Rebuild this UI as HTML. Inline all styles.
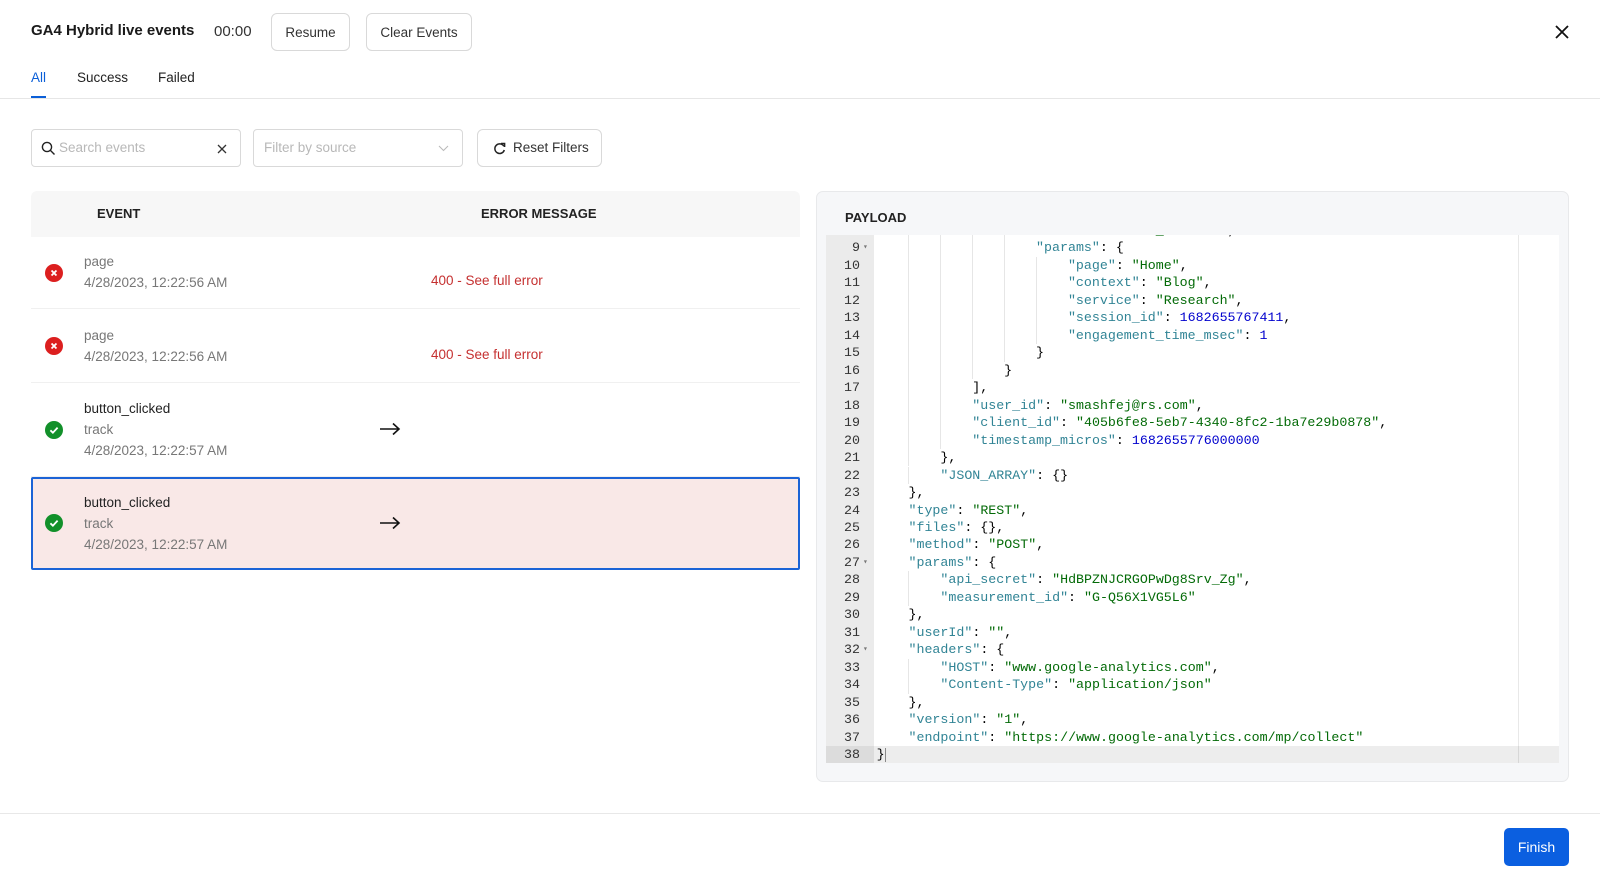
<!DOCTYPE html>
<html><head><meta charset="utf-8">
<style>
*{box-sizing:border-box;margin:0;padding:0}
body{width:1600px;height:880px;background:#fff;font-family:"Liberation Sans",sans-serif;color:#1f1f1f;position:relative;overflow:hidden}
.abs{position:absolute}
.btn{position:absolute;border:1px solid #d9d9d9;border-radius:6px;background:#fff;font-size:13.5px;color:#333;display:flex;align-items:center;justify-content:center}
.inp{position:absolute;border:1px solid #d9d9d9;border-radius:4px;background:#fff;font-size:13.5px;color:#b8b8b8}
.row{position:absolute;left:31px;width:769px;border-bottom:1px solid #f0f0f0}
.ic{position:absolute;left:14px;width:18px;height:18px;border-radius:50%}
.ic svg{width:18px;height:18px}
.t1{position:absolute;left:53px;font-size:13.5px;color:#222}
.t2{position:absolute;left:53px;font-size:13.5px;color:#777}
.err{position:absolute;left:400px;font-size:13.5px;color:#c53030}
.arr{position:absolute;left:348px}
.code{position:absolute;left:826px;top:235px;width:733px;height:528px;background:#fff;overflow:hidden;font-family:"Liberation Mono",monospace;font-size:13.3px}
.gut{position:absolute;left:0;top:0;width:48px;height:100%;background:#ebebeb}
.ln{position:absolute;left:0;width:733px;height:17.48px;line-height:17.48px;white-space:pre}
.ln .n{position:absolute;left:0;width:34px;text-align:right;color:#333}
.ln .f{position:absolute;left:37px;font-size:8px;color:#777}
.ln .c{position:absolute;left:50.6px;color:#000}
.g{display:inline-block;width:31.9px}
.g+.g{border-left:1px solid #e6e6e6}
.k{color:#318495}.s{color:#036a07}.v{color:#0000cd}
</style></head><body>
<div class="abs" style="left:31px;top:22px;font-size:15px;font-weight:700;color:#1a1a1a">GA4 Hybrid live events</div>
<div class="abs" style="left:214px;top:23px;font-size:15px;color:#333">00:00</div>
<div class="btn" style="left:271px;top:13px;width:79px;height:38px">Resume</div>
<div class="btn" style="left:366px;top:13px;width:106px;height:38px">Clear Events</div>
<svg class="abs" style="left:1554px;top:24px" width="16" height="16" viewBox="0 0 16 16"><path d="M2 2L14 14M14 2L2 14" stroke="#111" stroke-width="1.8"/></svg>
<div class="abs" style="left:31px;top:70px;font-size:13.5px;color:#0b5fd8">All</div>
<div class="abs" style="left:77px;top:70px;font-size:13.5px;color:#222">Success</div>
<div class="abs" style="left:158px;top:70px;font-size:13.5px;color:#222">Failed</div>
<div class="abs" style="left:31px;top:96px;width:15px;height:2px;background:#0b5fd8"></div>
<div class="abs" style="left:0;top:98px;width:1600px;height:1px;background:#e6e6e6"></div>

<div class="inp" style="left:31px;top:129px;width:210px;height:38px">
<svg class="abs" style="left:9px;top:11px" width="15" height="15" viewBox="0 0 15 15"><circle cx="6" cy="6" r="4.6" stroke="#222" stroke-width="1.4" fill="none"/><path d="M9.4 9.4L13.5 13.5" stroke="#222" stroke-width="1.4"/></svg>
<span class="abs" style="left:27px;top:10px">Search events</span>
<svg class="abs" style="left:185px;top:14px" width="10" height="10" viewBox="0 0 10 10"><path d="M1 1L9 9M9 1L1 9" stroke="#333" stroke-width="1.3"/></svg></div>
<div class="inp" style="left:253px;top:129px;width:210px;height:38px">
<span class="abs" style="left:10px;top:10px">Filter by source</span>
<svg class="abs" style="left:184px;top:15px" width="11" height="7" viewBox="0 0 11 7"><path d="M1 1L5.5 5.5L10 1" stroke="#bbb" stroke-width="1.1" fill="none"/></svg></div>
<div class="btn" style="left:477px;top:129px;width:125px;height:38px;justify-content:flex-start">
<svg class="abs" style="left:15px;top:12px" width="13" height="13" viewBox="0 0 13 13"><path d="M10.8 4.2A4.8 4.8 0 1 0 11.3 8" stroke="#222" stroke-width="1.5" fill="none"/><path d="M8 1.5L11.6 1.5L11.6 5" stroke="#222" stroke-width="1.5" fill="none"/></svg>
<span class="abs" style="left:35px;top:10px">Reset Filters</span></div>

<div class="abs" style="left:31px;top:191px;width:769px;height:46px;background:#f7f7f7;border-radius:6px 6px 0 0"></div>
<div class="abs" style="left:97px;top:206px;font-size:13px;font-weight:700;color:#222">EVENT</div>
<div class="abs" style="left:481px;top:206px;font-size:13px;font-weight:700;color:#222">ERROR MESSAGE</div>

<div class="row" style="top:237px;height:72px">
<div class="ic" style="top:27px;background:#dc1f1f"><svg viewBox="0 0 16 16"><path d="M5.8 5.8L10.2 10.2M10.2 5.8L5.8 10.2" stroke="#fff" stroke-width="1.6"/></svg></div>
<div class="t2" style="top:17px">page</div><div class="t2" style="top:38px">4/28/2023, 12:22:56 AM</div>
<div class="err" style="top:36px">400 - See full error</div></div>
<div class="row" style="top:309px;height:74px">
<div class="ic" style="top:28px;background:#dc1f1f"><svg viewBox="0 0 16 16"><path d="M5.8 5.8L10.2 10.2M10.2 5.8L5.8 10.2" stroke="#fff" stroke-width="1.6"/></svg></div>
<div class="t2" style="top:19px">page</div><div class="t2" style="top:40px">4/28/2023, 12:22:56 AM</div>
<div class="err" style="top:38px">400 - See full error</div></div>
<div class="row" style="top:383px;height:94px">
<div class="ic" style="top:38px;background:#12902a"><svg viewBox="0 0 16 16"><path d="M4.8 8.3L7 10.4L11.2 5.9" stroke="#fff" stroke-width="1.6" fill="none"/></svg></div>
<div class="t1" style="top:18px">button_clicked</div><div class="t2" style="top:39px">track</div><div class="t2" style="top:60px">4/28/2023, 12:22:57 AM</div>
<svg class="arr" style="top:39px" width="22" height="14" viewBox="0 0 22 14"><path d="M1 7H20M14 1.5L20 7L14 12.5" stroke="#111" stroke-width="1.6" fill="none"/></svg></div>
<div class="row" style="top:477px;height:93px;background:#f9e8e7;border:2px solid #1b63d6;border-radius:2px">
<div class="ic" style="left:12px;top:35px;background:#12902a"><svg viewBox="0 0 16 16"><path d="M4.8 8.3L7 10.4L11.2 5.9" stroke="#fff" stroke-width="1.6" fill="none"/></svg></div>
<div class="t1" style="left:51px;top:16px">button_clicked</div><div class="t2" style="left:51px;top:37px">track</div><div class="t2" style="left:51px;top:58px">4/28/2023, 12:22:57 AM</div>
<svg class="arr" style="left:346px;top:37px" width="22" height="14" viewBox="0 0 22 14"><path d="M1 7H20M14 1.5L20 7L14 12.5" stroke="#111" stroke-width="1.6" fill="none"/></svg></div>

<div class="abs" style="left:816px;top:191px;width:753px;height:591px;background:#f6f7f9;border:1px solid #e8e9eb;border-radius:7px"></div>
<div class="abs" style="left:845px;top:210px;font-size:13px;font-weight:700;color:#222">PAYLOAD</div>
<div class="code">
<div class="gut"></div>
<div class="abs" style="left:692px;top:0;width:1px;height:100%;background:#e8e8e8"></div>
<div class="ln" style="top:-13.2px"><span class="n">8</span><span class="c"><span class="g">    </span><span class="g">    </span><span class="g">    </span><span class="g">    </span><span class="g">    </span><span class="k">"name"</span>: <span class="s">"button_clicked"</span>,</span></div>
<div class="ln" style="top:4.3px"><span class="n">9</span><span class="f">▾</span><span class="c"><span class="g">    </span><span class="g">    </span><span class="g">    </span><span class="g">    </span><span class="g">    </span><span class="k">"params"</span>: {</span></div>
<div class="ln" style="top:21.8px"><span class="n">10</span><span class="c"><span class="g">    </span><span class="g">    </span><span class="g">    </span><span class="g">    </span><span class="g">    </span><span class="g">    </span><span class="k">"page"</span>: <span class="s">"Home"</span>,</span></div>
<div class="ln" style="top:39.3px"><span class="n">11</span><span class="c"><span class="g">    </span><span class="g">    </span><span class="g">    </span><span class="g">    </span><span class="g">    </span><span class="g">    </span><span class="k">"context"</span>: <span class="s">"Blog"</span>,</span></div>
<div class="ln" style="top:56.7px"><span class="n">12</span><span class="c"><span class="g">    </span><span class="g">    </span><span class="g">    </span><span class="g">    </span><span class="g">    </span><span class="g">    </span><span class="k">"service"</span>: <span class="s">"Research"</span>,</span></div>
<div class="ln" style="top:74.2px"><span class="n">13</span><span class="c"><span class="g">    </span><span class="g">    </span><span class="g">    </span><span class="g">    </span><span class="g">    </span><span class="g">    </span><span class="k">"session_id"</span>: <span class="v">1682655767411</span>,</span></div>
<div class="ln" style="top:91.7px"><span class="n">14</span><span class="c"><span class="g">    </span><span class="g">    </span><span class="g">    </span><span class="g">    </span><span class="g">    </span><span class="g">    </span><span class="k">"engagement_time_msec"</span>: <span class="v">1</span></span></div>
<div class="ln" style="top:109.2px"><span class="n">15</span><span class="c"><span class="g">    </span><span class="g">    </span><span class="g">    </span><span class="g">    </span><span class="g">    </span>}</span></div>
<div class="ln" style="top:126.6px"><span class="n">16</span><span class="c"><span class="g">    </span><span class="g">    </span><span class="g">    </span><span class="g">    </span>}</span></div>
<div class="ln" style="top:144.1px"><span class="n">17</span><span class="c"><span class="g">    </span><span class="g">    </span><span class="g">    </span>],</span></div>
<div class="ln" style="top:161.6px"><span class="n">18</span><span class="c"><span class="g">    </span><span class="g">    </span><span class="g">    </span><span class="k">"user_id"</span>: <span class="s">"smashfej@rs.com"</span>,</span></div>
<div class="ln" style="top:179.1px"><span class="n">19</span><span class="c"><span class="g">    </span><span class="g">    </span><span class="g">    </span><span class="k">"client_id"</span>: <span class="s">"405b6fe8-5eb7-4340-8fc2-1ba7e29b0878"</span>,</span></div>
<div class="ln" style="top:196.6px"><span class="n">20</span><span class="c"><span class="g">    </span><span class="g">    </span><span class="g">    </span><span class="k">"timestamp_micros"</span>: <span class="v">1682655776000000</span></span></div>
<div class="ln" style="top:214.0px"><span class="n">21</span><span class="c"><span class="g">    </span><span class="g">    </span>},</span></div>
<div class="ln" style="top:231.5px"><span class="n">22</span><span class="c"><span class="g">    </span><span class="g">    </span><span class="k">"JSON_ARRAY"</span>: {}</span></div>
<div class="ln" style="top:249.0px"><span class="n">23</span><span class="c"><span class="g">    </span>},</span></div>
<div class="ln" style="top:266.5px"><span class="n">24</span><span class="c"><span class="g">    </span><span class="k">"type"</span>: <span class="s">"REST"</span>,</span></div>
<div class="ln" style="top:283.9px"><span class="n">25</span><span class="c"><span class="g">    </span><span class="k">"files"</span>: {},</span></div>
<div class="ln" style="top:301.4px"><span class="n">26</span><span class="c"><span class="g">    </span><span class="k">"method"</span>: <span class="s">"POST"</span>,</span></div>
<div class="ln" style="top:318.9px"><span class="n">27</span><span class="f">▾</span><span class="c"><span class="g">    </span><span class="k">"params"</span>: {</span></div>
<div class="ln" style="top:336.4px"><span class="n">28</span><span class="c"><span class="g">    </span><span class="g">    </span><span class="k">"api_secret"</span>: <span class="s">"HdBPZNJCRGOPwDg8Srv_Zg"</span>,</span></div>
<div class="ln" style="top:353.9px"><span class="n">29</span><span class="c"><span class="g">    </span><span class="g">    </span><span class="k">"measurement_id"</span>: <span class="s">"G-Q56X1VG5L6"</span></span></div>
<div class="ln" style="top:371.3px"><span class="n">30</span><span class="c"><span class="g">    </span>},</span></div>
<div class="ln" style="top:388.8px"><span class="n">31</span><span class="c"><span class="g">    </span><span class="k">"userId"</span>: <span class="s">""</span>,</span></div>
<div class="ln" style="top:406.3px"><span class="n">32</span><span class="f">▾</span><span class="c"><span class="g">    </span><span class="k">"headers"</span>: {</span></div>
<div class="ln" style="top:423.8px"><span class="n">33</span><span class="c"><span class="g">    </span><span class="g">    </span><span class="k">"HOST"</span>: <span class="s">"www.google-analytics.com"</span>,</span></div>
<div class="ln" style="top:441.2px"><span class="n">34</span><span class="c"><span class="g">    </span><span class="g">    </span><span class="k">"Content-Type"</span>: <span class="s">"application/json"</span></span></div>
<div class="ln" style="top:458.7px"><span class="n">35</span><span class="c"><span class="g">    </span>},</span></div>
<div class="ln" style="top:476.2px"><span class="n">36</span><span class="c"><span class="g">    </span><span class="k">"version"</span>: <span class="s">"1"</span>,</span></div>
<div class="ln" style="top:493.7px"><span class="n">37</span><span class="c"><span class="g">    </span><span class="k">"endpoint"</span>: <span class="s">"https://www.google-analytics.com/mp/collect"</span></span></div>
<div class="ln" style="top:511.2px;background:rgba(0,0,0,0.07)"><span class="n" style="background:#dcdcdc;width:48px;padding-right:14px">38</span><span class="c">}</span><span class="abs" style="left:59px;top:2px;width:1px;height:14px;background:#888"></span></div>
</div>

<div class="abs" style="left:0;top:813px;width:1600px;height:1px;background:#e8e8e8"></div>
<div class="abs" style="left:1504px;top:828px;width:65px;height:38px;background:#0b5fe0;border-radius:5px;color:#fff;font-size:14px;display:flex;align-items:center;justify-content:center">Finish</div>
</body></html>
